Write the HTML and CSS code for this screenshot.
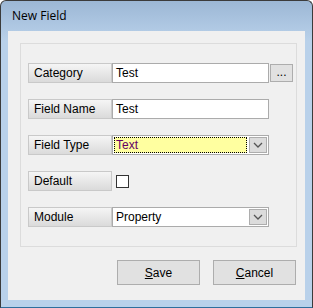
FILE: index.html
```html
<!DOCTYPE html>
<html lang="en">
<head>
<meta charset="UTF-8" />
<title>New Field</title>
<link rel="stylesheet" href="styles.css">
</head>
<body>
<div class="window">
  <div class="titlebar">New Field</div>
  <div class="client">
    <div class="group">
      <div class="row">
        <div class="label">Category</div>
        <div class="input">Test</div>
        <div class="browse">...</div>
      </div>
      <div class="row">
        <div class="label">Field Name</div>
        <div class="input">Test</div>
      </div>
      <div class="row">
        <div class="label">Field Type</div>
        <div class="select focused">
          <span class="value"><span class="focus-text">Text</span></span>
          <span class="drop"><svg width="10" height="6" viewBox="0 0 10 6"><path d="M1 1 L5 5 L9 1" fill="none" stroke="#555" stroke-width="1.3"/></svg></span>
        </div>
      </div>
      <div class="row">
        <div class="label">Default</div>
        <div class="checkbox"></div>
      </div>
      <div class="row">
        <div class="label">Module</div>
        <div class="select">
          <span class="value">Property</span>
          <span class="drop"><svg width="10" height="6" viewBox="0 0 10 6"><path d="M1 1 L5 5 L9 1" fill="none" stroke="#555" stroke-width="1.3"/></svg></span>
        </div>
      </div>
    </div>
    <div class="buttons">
      <button class="btn"><u>S</u>ave</button>
      <button class="btn"><u>C</u>ancel</button>
    </div>
  </div>
</div>
</body>
</html>
```

FILE: styles.css
```css
body {
  margin: 0;
  font-family: "Liberation Sans", Arial, sans-serif;
  font-size: 12px;
  color: #000;
}
.window {
  width: 313px;
  height: 308px;
  box-sizing: border-box;
  border: 1px solid #3b3b3b;
  border-bottom-color: #2f6e9c;
  border-radius: 6px 6px 0 0;
  background: linear-gradient(#9cb7d5, #b9d1ea 40px, #b9d1ea);
  padding: 0 7px 7px 7px;
  display: flex;
  flex-direction: column;
}
.titlebar {
  height: 30px;
  line-height: 30px;
  padding-left: 4px;
  font-family: "Open Sans", "Noto Sans", sans-serif;
  font-size: 12px;
  color: #000;
}
.client {
  flex: 1;
  background: #f0f0f0;
  padding: 12px 0 0 12px;
}
.group {
  width: 277px;
  height: 204px;
  box-sizing: border-box;
  border: 1px solid #dcdcdc;
  padding: 19px 0 0 7px;
  display: flex;
  flex-direction: column;
  gap: 16px;
}
.row {
  display: flex;
  align-items: center;
  height: 20px;
}
.label {
  width: 84px;
  height: 20px;
  box-sizing: border-box;
  border: 1px solid #c9c9c9;
  background: linear-gradient(#f5f5f5, #dadada);
  padding-left: 5px;
  line-height: 18px;
  font-size: 12px;
}
.input {
  width: 157px;
  height: 20px;
  box-sizing: border-box;
  border: 1px solid #ababab;
  background: #fff;
  padding-left: 3px;
  line-height: 18px;
}
.browse {
  margin-left: 1px;
  width: 23px;
  height: 18px;
  box-sizing: border-box;
  border: 1px solid #adadad;
  background: #e1e1e1;
  text-align: center;
  line-height: 14px;
  font-size: 12px;
}
.select {
  width: 157px;
  height: 20px;
  box-sizing: border-box;
  border: 1px solid #ababab;
  background: #fff;
  padding: 1px;
  display: flex;
}
.select .value {
  flex: 1;
  padding-left: 2px;
  line-height: 16px;
}
.select.focused .value {
  background: #ffffa0;
  outline: 1px dotted #000;
  outline-offset: -1px;
  margin-right: 1px;
}
.focus-text {
  color: #640064;
}
.drop {
  width: 18px;
  height: 16px;
  box-sizing: border-box;
  border: 1px solid #adadad;
  background: #dcdcdc;
  display: flex;
  align-items: center;
  justify-content: center;
  margin-left: 1px;
}
.checkbox {
  margin-left: 4px;
  width: 13px;
  height: 13px;
  box-sizing: border-box;
  border: 1px solid #333;
  background: #fff;
}
.buttons {
  display: flex;
  gap: 13px;
  margin: 13px 0 0 97px;
}
.btn {
  width: 83px;
  height: 25px;
  box-sizing: border-box;
  border: 1px solid #adadad;
  background: #e1e1e1;
  font-family: "Liberation Sans", Arial, sans-serif;
  font-size: 12px;
  color: #000;
  padding: 0;
}
```
